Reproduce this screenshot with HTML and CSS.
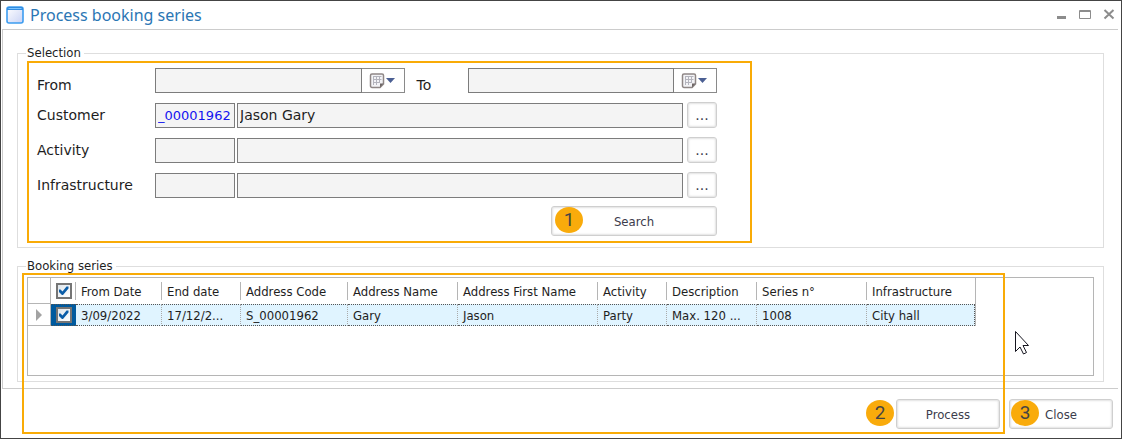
FILE: index.html
```html
<!DOCTYPE html>
<html lang="en">
<head>
  <meta charset="UTF-8">
  <meta name="viewport" content="width=device-width, initial-scale=1.0">
  <title>Process booking series</title>
  <link rel="stylesheet" href="styles.css">
</head>
<body>
  <div class="window">
    <header class="titlebar">
      <svg class="app-icon" width="18" height="18" viewBox="0 0 18 18">
        <defs>
          <linearGradient id="pane" x1="0" y1="0" x2="1" y2="1">
            <stop offset="0" stop-color="#ffffff"/>
            <stop offset="1" stop-color="#c9d3f5"/>
          </linearGradient>
        </defs>
        <rect x="1" y="1" width="16" height="16" rx="2" fill="url(#pane)" stroke="#3d9df0" stroke-width="1.6"/>
        <path d="M1 3a2 2 0 0 1 2-2h12a2 2 0 0 1 2 2v1H1z" fill="#2f8be0"/>
        <path d="M2.500 2.500h13" stroke="#7cc4ff"/>
      </svg>
      <h1>Process booking series</h1>
      <div class="window-controls">
        <button type="button" aria-label="Minimize">
          <svg width="12" height="12" viewBox="0 0 12 12"><path d="M2 8.500h9" stroke="#8c8c8c" stroke-width="3"/></svg>
        </button>
        <button type="button" aria-label="Maximize">
          <svg width="12" height="12" viewBox="0 0 12 12"><path d="M.5 1.500h11v8H.5zM.5 2.500h11" fill="none" stroke="#8c8c8c"/></svg>
        </button>
        <button type="button" aria-label="Close window">
          <svg width="12" height="12" viewBox="0 0 12 12"><path d="M1.500 1l9 8.500M10.500 1l-9 8.500" stroke="#8c8c8c" stroke-width="2"/></svg>
        </button>
      </div>
    </header>

    <main class="content">
      <fieldset class="group selection">
        <legend>Selection</legend>
        <form class="search-form">
          <div class="row dates">
            <label for="from">From</label>
            <div class="date-field">
              <input type="text" id="from">
              <button type="button" aria-label="Pick from date">
                <svg width="28" height="18" viewBox="0 0 28 18">
                  <path d="M3 2h10a1.500 1.500 0 0 1 1.500 1.500v8.500l-3.500 3.500h-8a1.500 1.500 0 0 1-1.500-1.500v-10.500a1.500 1.500 0 0 1 1.500-1.500z" fill="#f3f3f6" stroke="#8f8786" stroke-width="1.500"/>
                  <path d="M14.500 11.500h-3.500v4z" fill="#6f6766"/>
                  <path d="M4 4.500h8.500M4 7.500h8.500M4 10.500h7M4.500 4v9M7.500 4v9M10.500 4v7" stroke="#b4b4bd"/>
                  <path d="M17 6h9l-4.500 5z" fill="#4b5f93"/>
                </svg>
              </button>
            </div>
            <label class="to-label" for="to">To</label>
            <div class="date-field">
              <input type="text" id="to">
              <button type="button" aria-label="Pick to date">
                <svg width="28" height="18" viewBox="0 0 28 18">
                  <path d="M3 2h10a1.500 1.500 0 0 1 1.500 1.500v8.500l-3.500 3.500h-8a1.500 1.500 0 0 1-1.500-1.500v-10.500a1.500 1.500 0 0 1 1.500-1.500z" fill="#f3f3f6" stroke="#8f8786" stroke-width="1.500"/>
                  <path d="M14.500 11.500h-3.500v4z" fill="#6f6766"/>
                  <path d="M4 4.500h8.500M4 7.500h8.500M4 10.500h7M4.500 4v9M7.500 4v9M10.500 4v7" stroke="#b4b4bd"/>
                  <path d="M17 6h9l-4.500 5z" fill="#4b5f93"/>
                </svg>
              </button>
            </div>
          </div>
          <div class="row">
            <label for="customer">Customer</label>
            <input class="code" type="text" id="customer" value="_00001962">
            <input class="name" type="text" aria-label="Customer name" value="Jason Gary">
            <button class="btn browse" type="button" aria-label="Browse customers">...</button>
          </div>
          <div class="row">
            <label for="activity">Activity</label>
            <input class="code" type="text" id="activity">
            <input class="name" type="text" aria-label="Activity name">
            <button class="btn browse" type="button" aria-label="Browse activities">...</button>
          </div>
          <div class="row">
            <label for="infrastructure">Infrastructure</label>
            <input class="code" type="text" id="infrastructure">
            <input class="name" type="text" aria-label="Infrastructure name">
            <button class="btn browse" type="button" aria-label="Browse infrastructures">...</button>
          </div>
          <div class="actions">
            <div class="step">
              <button class="btn search" type="button">Search</button>
              <span class="badge badge-search">1</span>
            </div>
          </div>
        </form>
      </fieldset>

      <fieldset class="group series">
        <legend>Booking series</legend>
        <div class="grid">
          <table>
            <colgroup>
              <col class="c-marker"><col class="c-check"><col class="c-from"><col class="c-end"><col class="c-code"><col class="c-name">
              <col class="c-first"><col class="c-activity"><col class="c-desc"><col class="c-series"><col class="c-infra">
            </colgroup>
            <thead>
              <tr>
                <th class="marker"></th>
                <th class="check"><input type="checkbox" aria-label="Select all" checked></th>
                <th>From Date</th>
                <th>End date</th>
                <th>Address Code</th>
                <th>Address Name</th>
                <th>Address First Name</th>
                <th>Activity</th>
                <th>Description</th>
                <th>Series n°</th>
                <th>Infrastructure</th>
              </tr>
            </thead>
            <tbody>
              <tr>
                <td class="marker"><svg width="8" height="12" viewBox="0 0 8 12"><path d="M1 0l6 6-6 6z" fill="#a3a3a3"/></svg></td>
                <td class="check"><input type="checkbox" aria-label="Select series 1008" checked></td>
                <td>3/09/2022</td>
                <td>17/12/2...</td>
                <td>S_00001962</td>
                <td>Gary</td>
                <td>Jason</td>
                <td>Party</td>
                <td>Max. 120 ...</td>
                <td>1008</td>
                <td>City hall</td>
              </tr>
            </tbody>
          </table>
        </div>
      </fieldset>
    </main>

    <footer class="footer">
      <div class="step">
        <button class="btn" type="button">Process</button>
        <span class="badge badge-process">2</span>
      </div>
      <div class="step">
        <button class="btn" type="button">Close</button>
        <span class="badge badge-close">3</span>
      </div>
    </footer>

    <div class="highlight"></div>
    <svg class="pointer" width="16" height="26" viewBox="0 0 16 26">
      <path d="M1.500 1.500v20l4.500-4.500 3.500 7 3-1.500-3.500-7h5.500z" fill="#fff" stroke="#15151f"/>
    </svg>
  </div>
</body>
</html>
```

FILE: styles.css
```css
* {
    box-sizing: border-box;
}
body {
    margin: 0;
    font-family: "DejaVu Sans Condensed", "DejaVu Sans", sans-serif;
    font-stretch: condensed;
    font-size: 13px;
    color: #1e1e1e;
    background: #fff;
}
button, input {
    font: inherit;
    color: inherit;
    margin: 0;
}
.window {
    position: relative;
    min-height: 100vh;
    border: 1px solid #444;
    background: #fff;
}
.titlebar {
    display: flex;
    align-items: center;
    height: 28px;
    padding: 0 6px 0 5px;
}
.titlebar h1 {
    flex: 1;
    margin: 0 0 0 6px;
    font-family: "Noto Sans", sans-serif;
    font-size: 16px;
    font-weight: normal;
    line-height: 24px;
    color: #2a76b4;
}
.window-controls {
    display: flex;
    gap: 12px;
}
.window-controls button {
    display: flex;
    padding: 0;
    border: none;
    background: none;
}
.content {
    margin: 0 3px 0 1px;
    padding: 15px 14px 6px;
    border: solid #ccc;
    border-width: 1px 0 1px 1px;
}
.group {
    min-width: 0;
    margin: 0;
    padding: 0 9px 4px;
    border: 1px solid #dedede;
}
.group legend {
    margin-left: -1px;
    padding: 0 3px 0 1px;
    line-height: 16px;
}
.series {
    margin-top: 10px;
    padding: 3px 9px 5px;
}

/* search form */
.search-form {
    max-width: 725px;
    padding: 5px 33px 5px 8px;
    border: 2px solid #f9ab06;
    font-family: "DejaVu Sans", sans-serif;
    font-stretch: normal;
    font-size: 14px;
}
.row {
    display: flex;
    align-items: center;
    margin-bottom: 9px;
}
.dates {
    align-items: flex-end;
}
.row label {
    width: 118px;
}
.row .to-label {
    width: 63px;
    padding-left: 12px;
}
.row input {
    height: 25px;
    padding: 0 2px;
    border: 1px solid #7c7c7c;
    background: #f4f4f4;
    outline: none;
}
.row .code {
    width: 80px;
    margin-right: 2px;
    color: #1414f0;
    font-size: 13px;
}
.row .name {
    flex: 1;
    min-width: 0;
}
.date-field {
    display: flex;
    flex: 1;
    min-width: 0;
}
.date-field input {
    flex: 1;
    min-width: 0;
}
.date-field button {
    display: flex;
    align-items: center;
    width: 43px;
    padding: 0 7px;
    border: 1px solid #8a8a8a;
    border-left: none;
    background: #fff;
}
.btn {
    width: 104px;
    height: 30px;
    padding: 0;
    border: 1px solid #cfcfcf;
    border-radius: 3px;
    background: #fff;
    box-shadow: inset 0 0 2px 1px #e2e2e2;
    color: #3c3c4c;
}
.btn.browse {
    width: 30px;
    height: 26px;
    margin-left: 4px;
}
.btn.search {
    width: 166px;
    font-family: "DejaVu Sans Condensed", "DejaVu Sans", sans-serif;
    font-stretch: condensed;
    font-size: 13px;
}
.actions {
    display: flex;
    justify-content: flex-end;
    margin-top: -1px;
}
.step {
    position: relative;
}
.badge {
    position: absolute;
    top: 1px;
    width: 28px;
    height: 26px;
    border-radius: 50%;
    background: #f9ab0b;
    color: #444;
    font-family: Roboto, sans-serif;
    font-stretch: normal;
    font-size: 19px;
    line-height: 26px;
    text-align: center;
}
.badge-search {
    left: 4px;
}
.badge-process {
    left: -30px;
}
.badge-close {
    left: 2px;
}

/* booking grid */
.grid {
    min-height: 99px;
    border: 1px solid #b5b5b5;
}
table {
    table-layout: fixed;
    width: 948px;
    border-collapse: separate;
    border-spacing: 0;
    border-right: 1px solid #b5b5b5;
}
.c-marker { width: 23px; }
.c-check { width: 25px; }
.c-from { width: 86px; }
.c-end { width: 79px; }
.c-code { width: 107px; }
.c-name { width: 110px; }
.c-first { width: 140px; }
.c-activity { width: 69px; }
.c-desc { width: 90px; }
.c-series { width: 110px; }
.c-infra { width: 108px; }
th, td {
    padding: 0 0 0 5px;
    font-weight: normal;
    text-align: left;
    white-space: nowrap;
    overflow: hidden;
}
th {
    height: 26px;
    background: linear-gradient(#b5b5b5, #b5b5b5) right 4px / 1px 18px no-repeat;
}
th:last-child {
    background: none;
}
td {
    height: 22px;
    border: dotted #555;
    border-width: 1px 0;
    background: #e0f4ff;
}
td + td + td {
    border-right: 1px dotted #aaa;
}
td:last-child {
    border-right-color: #555;
}
.marker {
    padding: 0;
    border: solid #b5b5b5;
    border-width: 0 1px 1px 0;
    background: #fff;
    text-align: center;
}
.marker svg {
    display: block;
    margin: 0 auto;
}
.check {
    padding: 0;
    text-align: center;
}
td.check {
    background: #005a9e;
}
.check input {
    display: block;
    position: relative;
    width: 16px;
    height: 16px;
    margin: 0 auto;
    appearance: none;
    border: 2px solid #757575;
    background: linear-gradient(135deg, #dfe6ec, #fff);
}
.check input:checked::after {
    content: "";
    display: block;
    width: 10px;
    height: 10px;
    margin: 1px;
    background: #0a5da8;
    clip-path: polygon(0 35%, 20% 35%, 40% 55%, 80% 5%, 100% 5%, 100% 25%, 45% 90%, 35% 90%, 0 55%);
}

.footer {
    display: flex;
    justify-content: flex-end;
    gap: 9px;
    padding: 10px 8px 8px;
}
.highlight {
    position: absolute;
    top: 272px;
    left: 21px;
    right: 116px;
    bottom: 4px;
    border: 2px solid #f9ab06;
    pointer-events: none;
}
.pointer {
    position: absolute;
    top: 329px;
    right: 91px;
}
```
